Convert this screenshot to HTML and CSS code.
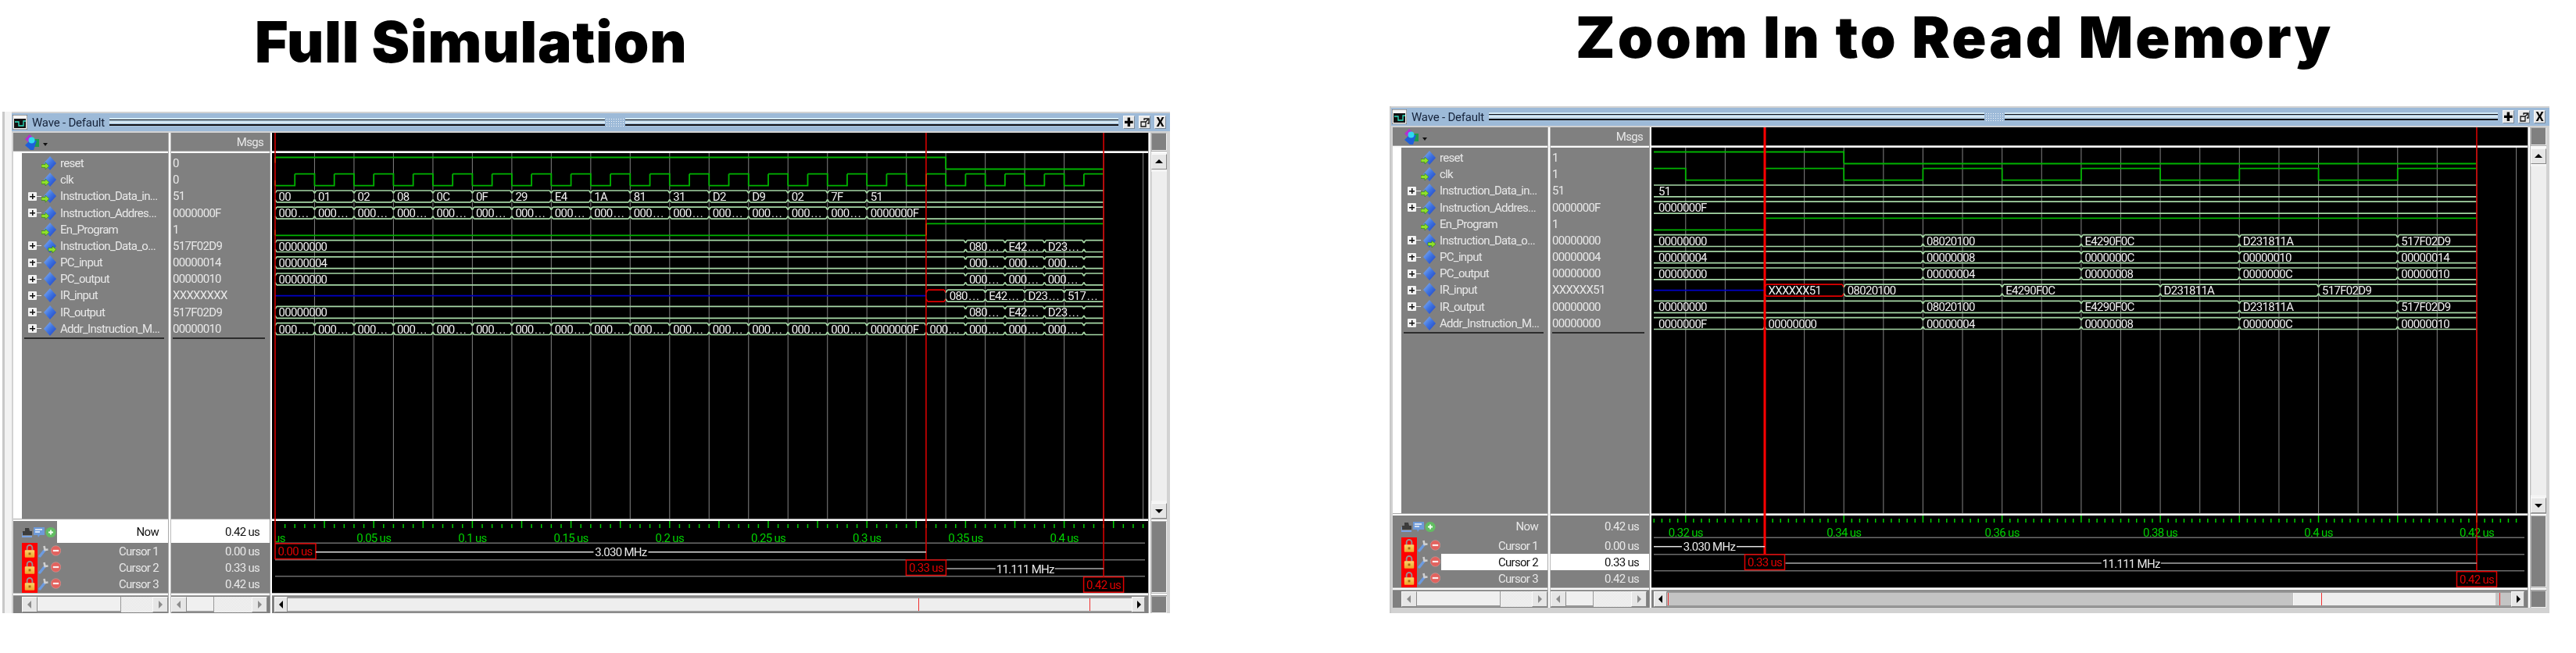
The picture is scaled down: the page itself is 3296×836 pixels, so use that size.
FILE: index.html
```html
<!DOCTYPE html>
<html lang="en">
<head>
<meta charset="utf-8">
<title>Full Simulation and Zoom In to Read Memory</title>
<link rel="stylesheet" href="styles.css">
<script src="app.js" defer></script>
</head>
<body>
<svg class="defs" width="0" height="0" aria-hidden="true">
  <defs>
    <linearGradient id="gem" x1="0" y1="0" x2="1" y2="1">
      <stop offset="0" stop-color="#8fb8f2"/><stop offset=".5" stop-color="#3f74e0"/><stop offset="1" stop-color="#1c3fc4"/>
    </linearGradient>
    <linearGradient id="gold" x1="0" y1="0" x2="0" y2="1">
      <stop offset="0" stop-color="#fbd66a"/><stop offset="1" stop-color="#eea52a"/>
    </linearGradient>
    <symbol id="sig-plain" viewBox="0 0 19 20"><path d="M11 1l8 9-8 9-8-9z" fill="url(#gem)"/></symbol>
    <symbol id="sig-in" viewBox="0 0 19 20"><path d="M11 1l8 9-8 9-8-9z" fill="url(#gem)"/><path d="M0 11.500h5V9l5 4.500-5 4.500v-2.500H0z" fill="#8fe02a" stroke="#2d7a10" stroke-width=".6"/></symbol>
    <symbol id="sig-out" viewBox="0 0 19 20"><path d="M11 1l8 9-8 9-8-9z" fill="url(#gem)"/><path d="M9 12.500h5V10l5 4.500-5 4.500v-2.500H9z" fill="#8fe02a" stroke="#2d7a10" stroke-width=".6"/></symbol>
    <symbol id="lock" viewBox="0 0 14 20"><path d="M3.500 9V5.500a3.500 3.500 0 0 1 7 0V9" fill="none" stroke="#9a8f8f" stroke-width="2"/><rect x="0.500" y="8.500" width="13" height="10" rx="1" fill="url(#gold)"/><rect x="5.500" y="12" width="3" height="3" fill="#a86b10"/></symbol>
    <symbol id="wrench" viewBox="0 0 14 18"><path d="M2 16L8.500 8" stroke="#6c9be0" stroke-width="3.400" stroke-linecap="round" fill="none"/><path d="M7.500 3L8.500 8l4-.5" stroke="#d0d0d0" stroke-width="2.600" fill="none"/></symbol>
    <symbol id="minus" viewBox="0 0 13 16"><circle cx="6.500" cy="8" r="6.300" fill="#e2625e" stroke="#c9a09e" stroke-width=".6"/><rect x="2.800" y="6.900" width="7.400" height="2.200" fill="#fbeeee"/></symbol>
    <symbol id="ni-print" viewBox="0 0 14 15"><path d="M4 6V2h5l1 4h3v5H1V6z" fill="#3c3c3c"/><path d="M0 13h13" stroke="#7aa4e4" stroke-width="2"/><path d="M0 8v5" stroke="#7aa4e4" stroke-width="1.400"/></symbol>
    <symbol id="ni-note" viewBox="0 0 14 15"><path d="M0 1h14v10H8l-2 3-1-3H0z" fill="#6e9ad8"/><path d="M2 4h9M2 7h6" stroke="#f2f6fc" stroke-width="1.400"/></symbol>
    <symbol id="ni-add" viewBox="0 0 14 15"><circle cx="7" cy="7.500" r="6.600" fill="#62bd62"/><path d="M4 7.500h6M7 4.500v6" stroke="#f4fff4" stroke-width="1.800"/></symbol>
  </defs>
</svg>

<main class="page">
  <section class="figure figure-a">
    <h1 class="heading">Full Simulation</h1>
    <div class="outer-frame">
      <div class="window window-clipped">
        <header class="title">
          <svg class="title-icon" viewBox="0 0 19 19"><rect width="19" height="19" fill="#f4f4f4" stroke="#555"/><rect x="2" y="5" width="15" height="12" fill="#111"/><path d="M3 9h5v5h6V8h3" fill="none" stroke="#2fe0c0" stroke-width="1.300"/></svg>
          <span class="title-text">Wave - Default</span>
          <i class="stripes stripes-a"></i><i class="grip"></i><i class="stripes"></i>
          <div class="title-btns">
            <span class="tbtn">+</span>
            <span class="tbtn"><svg class="restore" viewBox="0 0 12 12"><path d="M1 5h6v6H1zM5 3V1h6v6H9M7 5l3-3" fill="none" stroke="#111" stroke-width="1.300"/></svg></span>
            <span class="tbtn tbtn-x">X</span>
          </div>
        </header>
        <div class="panes">
          <div class="col col-names">
            <div class="head-cell"><svg class="multi" viewBox="0 0 21 22"><path d="M8 1l6 6-6 6-6-6z" fill="#b42fd0"/><rect x="10" y="7" width="10" height="10" fill="#1f9a4c"/><path d="M8 9l9 0-4 12-4 0-7-6z" fill="#1f5fd8"/><circle cx="10.500" cy="8.500" r="4" fill="#2fd8f0"/></svg><i class="caret"></i></div>
            <i class="hsep"></i>
            <div class="rows names">
              <div class="sig-row"><i class="exp none"></i><svg class="sig"><use href="#sig-in"/></svg><span>reset</span></div>
              <div class="sig-row"><i class="exp none"></i><svg class="sig"><use href="#sig-in"/></svg><span>clk</span></div>
              <div class="sig-row"><i class="exp"></i><svg class="sig"><use href="#sig-in"/></svg><span>Instruction_Data_in...</span></div>
              <div class="sig-row"><i class="exp"></i><svg class="sig"><use href="#sig-in"/></svg><span>Instruction_Addres...</span></div>
              <div class="sig-row"><i class="exp none"></i><svg class="sig"><use href="#sig-in"/></svg><span>En_Program</span></div>
              <div class="sig-row"><i class="exp"></i><svg class="sig"><use href="#sig-out"/></svg><span>Instruction_Data_o...</span></div>
              <div class="sig-row"><i class="exp"></i><svg class="sig"><use href="#sig-plain"/></svg><span>PC_input</span></div>
              <div class="sig-row"><i class="exp"></i><svg class="sig"><use href="#sig-plain"/></svg><span>PC_output</span></div>
              <div class="sig-row"><i class="exp"></i><svg class="sig"><use href="#sig-plain"/></svg><span>IR_input</span></div>
              <div class="sig-row"><i class="exp"></i><svg class="sig"><use href="#sig-plain"/></svg><span>IR_output</span></div>
              <div class="sig-row"><i class="exp"></i><svg class="sig"><use href="#sig-plain"/></svg><span>Addr_Instruction_M...</span></div>
              <i class="rows-end rows-end-names"></i>
            </div>
            <i class="hsep"></i>
            <div class="foot">
              <div class="now-row">
                <div class="now-icons"><svg class="ni"><use href="#ni-print"/></svg><svg class="ni"><use href="#ni-note"/></svg><svg class="ni"><use href="#ni-add"/></svg></div>
                <span class="foot-label selected">Now</span>
              </div>
              <div class="cur-row"><svg class="lock"><use href="#lock"/></svg><svg class="wrench"><use href="#wrench"/></svg><svg class="minus"><use href="#minus"/></svg><span class="foot-label">Cursor 1</span></div>
              <div class="cur-row"><svg class="lock"><use href="#lock"/></svg><svg class="wrench"><use href="#wrench"/></svg><svg class="minus"><use href="#minus"/></svg><span class="foot-label">Cursor 2</span></div>
              <div class="cur-row"><svg class="lock"><use href="#lock"/></svg><svg class="wrench"><use href="#wrench"/></svg><svg class="minus"><use href="#minus"/></svg><span class="foot-label">Cursor 3</span></div>
            </div>
            <i class="hsep hsep-4"></i>
            <div class="hscroll hscroll-names"><i class="sb-btn sb-left"></i><i class="sb-thumb thumb-names"></i><i class="sb-dots"></i><i class="sb-btn sb-right"></i></div>
          </div>
          <i class="vsep vsep-4"></i>
          <div class="col col-values">
            <div class="head-cell head-msgs">Msgs</div>
            <i class="hsep"></i>
            <div class="rows values">
              <div class="val-row">0</div><div class="val-row">0</div><div class="val-row">51</div><div class="val-row">0000000F</div><div class="val-row">1</div><div class="val-row">517F02D9</div><div class="val-row">00000014</div><div class="val-row">00000010</div><div class="val-row">XXXXXXXX</div><div class="val-row">517F02D9</div><div class="val-row">00000010</div>
              <i class="rows-end rows-end-values"></i>
            </div>
            <i class="hsep"></i>
            <div class="foot">
              <div class="now-row"><span class="foot-label val selected">0.42 us</span></div>
              <div class="cur-row"><span class="foot-label val">0.00 us</span></div>
              <div class="cur-row"><span class="foot-label val">0.33 us</span></div>
              <div class="cur-row"><span class="foot-label val">0.42 us</span></div>
            </div>
            <i class="hsep hsep-4"></i>
            <div class="hscroll hscroll-values"><i class="sb-btn sb-left"></i><i class="sb-thumb thumb-values"></i><i class="sb-dots"></i><i class="sb-btn sb-right"></i></div>
          </div>
          <i class="vsep"></i>
          <div class="col col-wave">
            <svg class="wave" id="wave-a" width="1121" height="589"></svg>
            <i class="hsep hsep-4"></i>
            <div class="hscroll hscroll-wave"><i class="sb-btn sb-left dark"></i>
              <div class="track track-light"><i class="mark mark-a1"></i><i class="mark mark-a2"></i></div>
            <i class="sb-btn sb-right dark"></i></div>
          </div>
          <i class="vsep vsep-4"></i>
          <div class="col col-vscroll">
            <i class="block block-head"></i>
            <i class="hsep"></i>
            <div class="vscroll"><i class="sb-btn sb-up"></i><i class="vtrack"></i><i class="sb-btn sb-down"></i></div>
            <i class="hsep"></i>
            <i class="block block-foot"></i>
            <i class="hsep hsep-4"></i>
            <i class="block block-corner"></i>
          </div>
        </div>
      </div>
    </div>
  </section>

  <section class="figure figure-b">
    <h1 class="heading">Zoom In to Read Memory</h1>
    <div class="window window-full">
      <header class="title">
        <svg class="title-icon" viewBox="0 0 19 19"><rect width="19" height="19" fill="#f4f4f4" stroke="#555"/><rect x="2" y="5" width="15" height="12" fill="#111"/><path d="M3 9h5v5h6V8h3" fill="none" stroke="#2fe0c0" stroke-width="1.300"/></svg>
        <span class="title-text">Wave - Default</span>
        <i class="stripes stripes-a"></i><i class="grip"></i><i class="stripes"></i>
        <div class="title-btns">
          <span class="tbtn">+</span>
          <span class="tbtn"><svg class="restore" viewBox="0 0 12 12"><path d="M1 5h6v6H1zM5 3V1h6v6H9M7 5l3-3" fill="none" stroke="#111" stroke-width="1.300"/></svg></span>
          <span class="tbtn tbtn-x">X</span>
        </div>
      </header>
      <div class="panes">
        <div class="col col-names">
          <div class="head-cell"><svg class="multi" viewBox="0 0 21 22"><path d="M8 1l6 6-6 6-6-6z" fill="#b42fd0"/><rect x="10" y="7" width="10" height="10" fill="#1f9a4c"/><path d="M8 9l9 0-4 12-4 0-7-6z" fill="#1f5fd8"/><circle cx="10.500" cy="8.500" r="4" fill="#2fd8f0"/></svg><i class="caret"></i></div>
          <i class="hsep"></i>
          <div class="rows names">
            <div class="sig-row"><i class="exp none"></i><svg class="sig"><use href="#sig-in"/></svg><span>reset</span></div>
            <div class="sig-row"><i class="exp none"></i><svg class="sig"><use href="#sig-in"/></svg><span>clk</span></div>
            <div class="sig-row"><i class="exp"></i><svg class="sig"><use href="#sig-in"/></svg><span>Instruction_Data_in...</span></div>
            <div class="sig-row"><i class="exp"></i><svg class="sig"><use href="#sig-in"/></svg><span>Instruction_Addres...</span></div>
            <div class="sig-row"><i class="exp none"></i><svg class="sig"><use href="#sig-in"/></svg><span>En_Program</span></div>
            <div class="sig-row"><i class="exp"></i><svg class="sig"><use href="#sig-out"/></svg><span>Instruction_Data_o...</span></div>
            <div class="sig-row"><i class="exp"></i><svg class="sig"><use href="#sig-plain"/></svg><span>PC_input</span></div>
            <div class="sig-row"><i class="exp"></i><svg class="sig"><use href="#sig-plain"/></svg><span>PC_output</span></div>
            <div class="sig-row"><i class="exp"></i><svg class="sig"><use href="#sig-plain"/></svg><span>IR_input</span></div>
            <div class="sig-row"><i class="exp"></i><svg class="sig"><use href="#sig-plain"/></svg><span>IR_output</span></div>
            <div class="sig-row"><i class="exp"></i><svg class="sig"><use href="#sig-plain"/></svg><span>Addr_Instruction_M...</span></div>
            <i class="rows-end rows-end-names"></i>
          </div>
          <i class="hsep"></i>
          <div class="foot">
            <div class="now-row">
              <div class="now-icons"><svg class="ni"><use href="#ni-print"/></svg><svg class="ni"><use href="#ni-note"/></svg><svg class="ni"><use href="#ni-add"/></svg></div>
              <span class="foot-label">Now</span>
            </div>
            <div class="cur-row"><svg class="lock"><use href="#lock"/></svg><svg class="wrench"><use href="#wrench"/></svg><svg class="minus"><use href="#minus"/></svg><span class="foot-label">Cursor 1</span></div>
            <div class="cur-row"><svg class="lock"><use href="#lock"/></svg><svg class="wrench"><use href="#wrench"/></svg><svg class="minus"><use href="#minus"/></svg><span class="foot-label selected">Cursor 2</span></div>
            <div class="cur-row"><svg class="lock"><use href="#lock"/></svg><svg class="wrench"><use href="#wrench"/></svg><svg class="minus"><use href="#minus"/></svg><span class="foot-label">Cursor 3</span></div>
          </div>
          <i class="hsep hsep-4"></i>
          <div class="hscroll hscroll-names"><i class="sb-btn sb-left"></i><i class="sb-thumb thumb-names"></i><i class="sb-dots"></i><i class="sb-btn sb-right"></i></div>
        </div>
        <i class="vsep vsep-4"></i>
        <div class="col col-values">
          <div class="head-cell head-msgs">Msgs</div>
          <i class="hsep"></i>
          <div class="rows values">
            <div class="val-row">1</div><div class="val-row">1</div><div class="val-row">51</div><div class="val-row">0000000F</div><div class="val-row">1</div><div class="val-row">00000000</div><div class="val-row">00000004</div><div class="val-row">00000000</div><div class="val-row">XXXXXX51</div><div class="val-row">00000000</div><div class="val-row">00000000</div>
            <i class="rows-end rows-end-values"></i>
          </div>
          <i class="hsep"></i>
          <div class="foot">
            <div class="now-row"><span class="foot-label val">0.42 us</span></div>
            <div class="cur-row"><span class="foot-label val">0.00 us</span></div>
            <div class="cur-row"><span class="foot-label val selected">0.33 us</span></div>
            <div class="cur-row"><span class="foot-label val">0.42 us</span></div>
          </div>
          <i class="hsep hsep-4"></i>
          <div class="hscroll hscroll-values"><i class="sb-btn sb-left"></i><i class="sb-thumb thumb-values"></i><i class="sb-dots"></i><i class="sb-btn sb-right"></i></div>
        </div>
        <i class="vsep"></i>
        <div class="col col-wave">
          <svg class="wave" id="wave-b" width="1121" height="589"></svg>
          <i class="hsep hsep-4"></i>
          <div class="hscroll hscroll-wave"><i class="sb-btn sb-left dark"></i>
            <div class="track track-zoomed"><i class="mark mark-b0"></i><i class="thumb-wave"></i><i class="mark mark-b1"></i><i class="mark mark-b2"></i></div>
          <i class="sb-btn sb-right dark"></i></div>
        </div>
        <i class="vsep vsep-4"></i>
        <div class="col col-vscroll">
          <i class="block block-head"></i>
          <i class="hsep"></i>
          <div class="vscroll"><i class="sb-btn sb-up"></i><i class="vtrack"></i><i class="sb-btn sb-down"></i></div>
          <i class="hsep"></i>
          <i class="block block-foot"></i>
          <i class="hsep hsep-4"></i>
          <i class="block block-corner"></i>
        </div>
      </div>
    </div>
  </section>
</main>
</body>
</html>
```
FILE: styles.css
```css
* { box-sizing: border-box; }
html, body { margin: 0; padding: 0; background: #fff; }
body { width: 3296px; height: 836px; overflow: hidden; font-family: Roboto, "Liberation Sans", sans-serif; }
i { display: block; font-style: normal; }
.defs { position: absolute; }

.page { display: flex; align-items: flex-start; }
.figure-a { margin-left: 3px; width: 1494px; }
.figure-b { margin-left: 281px; width: 1484px; }

.heading {
  margin: 0; font-family: Inter, Lato, sans-serif; font-weight: 900; color: #000;
  font-size: 73px; line-height: 95px; white-space: nowrap; filter: blur(.4px);
}
.figure-a .heading { height: 143px; padding: 6px 0 0 323px; letter-spacing: .85px; }
.figure-b .heading { height: 136px; padding: 0 0 0 238px; letter-spacing: 3px; }

.outer-frame { padding-left: 12px; background: linear-gradient(90deg, #c8c8c8 3px, #f2f2f2 3px); }
.window {
  width: 1482px; padding-top: 2px; background: #d2d2d2; overflow: hidden;
  filter: blur(.35px); color: #e8e8e8; font-size: 15px; letter-spacing: -.7px;
}
.window-clipped { height: 642px; }
.window-full { height: 647px; box-sizing: content-box; border-left: 2px solid #c8c8c8; width: 1482px; }

.title { display: flex; align-items: center; height: 23px; background: #9dbad8; color: #16233a; }
.title-icon { width: 19px; height: 19px; margin-left: 1px; flex: none; }
.title-text { width: 105px; padding-left: 6px; font-size: 15px; letter-spacing: -.2px; white-space: nowrap; flex: none; }
.stripes {
  flex: 1; height: 11px;
  background: linear-gradient(180deg, #d4eaf6 0 2px, #0a0a12 2px 3.500px, #b9d4e6 3.500px 5px, #f0f7fb 5px 6.500px, #b5cfe3 6.500px 8.500px, #0f0f16 8.500px 10px, #a9c4dc 10px);
}
.stripes-a { flex: none; width: 634px; }
.grip {
  width: 24px; height: 12px; margin: 0 1px; flex: none;
  background: radial-gradient(circle, #f4f8fb 40%, transparent 45%) 0 0 / 3px 3px;
}
.title-btns { display: flex; gap: 5px; margin: 0 5px 0 6px; flex: none; }
.tbtn {
  display: flex; align-items: center; justify-content: center; width: 15px; height: 17px;
  background: #e8e8e8; color: #000; font-size: 22px; font-weight: 900; letter-spacing: 0; line-height: 17px;
  border: 1px solid; border-color: #fafafa #7b8a9a #7b8a9a #fafafa;
}
.tbtn-x { font-size: 16px; font-weight: 700; }
.restore { width: 12px; height: 12px; }

.panes { display: flex; height: 615px; margin-top: 2px; padding-left: 2px; }
.col { display: flex; flex-direction: column; flex: none; }
.col-names { width: 198px; }
.col-values { width: 126px; }
.col-wave { width: 1121px; }
.col-vscroll { width: 20px; }
.vsep { width: 3px; flex: none; background: linear-gradient(90deg, #9a9a9a 1px, #fff 1px); }
.vsep-4 { width: 4px; background: linear-gradient(90deg, #aaa 1px, #fff 1px 3px, #bbb 3px); }
.hsep { height: 3px; flex: none; background: linear-gradient(180deg, #a8a8a8 1px, #fbfbfb 1px); }
.hsep-4 { height: 4px; background: linear-gradient(180deg, #b8b8b8 1px, #fbfbfb 1px 3px, #a0a0a0 3px); }

.head-cell { height: 23px; flex: none; background: #808080; display: flex; align-items: center; padding-left: 13px; }
.multi { width: 21px; height: 22px; }
.caret { width: 0; height: 0; margin: 6px 0 0 4px; border: 3px solid transparent; border-top: 4px solid #111; border-bottom: 0; }
.head-msgs { justify-content: flex-end; padding: 0 8px 0 0; }

.rows { height: 468px; flex: none; background: #808080; padding-top: 2.4px; display: flex; flex-direction: column; }
.names { border-left: 11px solid #fff; }
.sig-row { height: 21.2px; flex: none; display: flex; align-items: center; padding-left: 8px; white-space: nowrap; }
.val-row { height: 21.2px; flex: none; display: flex; align-items: center; padding-left: 2px; white-space: nowrap; }
.exp {
  position: relative; width: 11px; height: 11px; margin-right: 6px; flex: none; border-radius: 1px;
  background:
    linear-gradient(#111, #111) center / 7px 1.500px no-repeat,
    linear-gradient(#111, #111) center / 1.500px 7px no-repeat,
    #f2f2f2;
}
.exp::after { content: ""; position: absolute; left: 11px; top: 5px; width: 6px; height: 1px; background: #e8e8e8; }
.exp.none { visibility: hidden; }
.sig { width: 19px; height: 20px; margin-right: 5px; flex: none; }
.rows-end { height: 2px; flex: none; background: #2c2c2c; margin-top: 1px; }
.rows-end-names { margin-left: 3px; width: 179px; }
.rows-end-values { margin-left: 2px; width: 118px; }

.foot { height: 92px; flex: none; background: #808080; display: flex; flex-direction: column; }
.now-row { height: 28px; flex: none; display: flex; }
.now-icons { display: flex; align-items: center; gap: 1px; width: 56px; padding-left: 11px; flex: none; }
.ni { width: 14px; height: 15px; flex: none; }
.cur-row { height: 21.2px; flex: none; display: flex; align-items: stretch; padding-left: 11px; }
.lock { width: 20px; height: 21.2px; padding: 1px 3px; background: #ff0000; flex: none; }
.wrench { width: 14px; height: 18px; margin: 1px 1px 0 1px; flex: none; }
.minus { width: 13px; height: 16px; margin: 2px 0 0 1px; flex: none; }
.foot-label { flex: 1; display: flex; align-items: center; justify-content: flex-end; padding-right: 12px; white-space: nowrap; }
.foot-label.val { padding-right: 13px; }
.foot-label.selected { background: #fff; color: #111; }
.cur-row .foot-label { margin-left: 1px; }
.col-values .cur-row { padding-left: 0; }
.col-values .cur-row .foot-label { margin-left: 0; }

.wave { display: block; flex: none; background: #000; }

.hscroll { height: 22px; flex: none; display: flex; background: #808080; padding: 1px 0 1px 0; }
.hscroll-names { padding-left: 11px; }
.hscroll-values { padding-right: 3px; }
.hscroll-wave { padding: 1px 4px 1px 3px; }
.sb-btn { position: relative; width: 20px; flex: none; background: #e6e6e6; border: 1px solid; border-color: #fafafa #8a8a8a #8a8a8a #fafafa; }
.sb-btn::after { content: ""; position: absolute; left: 50%; top: 50%; width: 0; height: 0; border: 5px solid transparent; }
.sb-left::after { border-right-color: #8c8c8c; border-left-width: 0; transform: translate(-3px, -5px); }
.sb-right::after { border-left-color: #8c8c8c; border-right-width: 0; transform: translate(-2px, -5px); }
.dark.sb-btn { width: 17px; }
.dark.sb-left::after { border-right-color: #000; }
.dark.sb-right::after { border-left-color: #000; }
.sb-thumb { flex: none; background: #f0f0f0; border-right: 1px solid #999; border-bottom: 2px solid #999; }
.thumb-names { width: 107px; }
.thumb-values { width: 35px; }
.sb-dots { flex: 1; background: #f2f2f2 repeating-conic-gradient(#e4e4e4 0 25%, #f6f6f6 0 50%) 0 0 / 2px 2px; }

.track { position: relative; flex: 1; border-top: 2px solid #999; border-bottom: 2px solid #999; }
.track-light { background: #eeeeee; }
.track-zoomed { background: #c4c4c4; }
.thumb-wave { position: absolute; left: 801px; right: 20px; top: 0; bottom: 0; background: #eeeeee; border-left: 1px solid #fafafa; }
.mark { position: absolute; top: 0; bottom: 0; width: 1px; background: #f03030; z-index: 1; }
.mark-a1 { left: 807px; }
.mark-a2 { left: 1026px; }
.mark-b0 { left: 1px; }
.mark-b1 { left: 837px; }
.mark-b2 { left: 1065px; }

.block { background: #808080; flex: none; border: 1px solid; border-color: #b0b0b0 #eee #eee #b0b0b0; }
.block-head { height: 23px; }
.block-foot { height: 92px; }
.block-corner { height: 22px; }
.vscroll { height: 468px; flex: none; display: flex; flex-direction: column; background: #f4f4f4; padding-top: 1px; }
.vtrack { flex: 1; background: #eeeeee; margin: 3px 0; border-left: 1px solid #ddd; }
.sb-up, .sb-down { width: 20px; height: 20px; }
.sb-up::after { border-bottom-color: #000; border-top-width: 0; transform: translate(-5px, -3px); }
.sb-down::after { border-top-color: #000; border-bottom-width: 0; transform: translate(-5px, -2px); }

.wave text { font-family: Roboto, "Liberation Sans", sans-serif; font-size: 15px; letter-spacing: -.7px; }
.wave .dots { letter-spacing: .9px; }
```
FILE: app.js
```js
const NS = 'http://www.w3.org/2000/svg';
const T_END = 0.42;

const seq = (from, step, labels) => labels.map((v, i) => [from + step * i, v]);

const SIGNALS = [
  { bit: [[0, 1], [0.34, 0]] },
  { clock: true },
  { bus: [...seq(0, 0.02, ['00','01','02','08','0C','0F','29','E4','1A','81','31','D2','D9','02','7F']), [0.30, '51']] },
  { bus: [...seq(0, 0.02, Array(15).fill('00000000')), [0.30, '0000000F']] },
  { bit: [[0, 0], [0.33, 1]] },
  { bus: [[0, '00000000'], ...seq(0.35, 0.02, ['08020100','E4290F0C','D231811A','517F02D9'])] },
  { bus: [[0, '00000004'], ...seq(0.35, 0.02, ['00000008','0000000C','00000010','00000014'])] },
  { bus: [[0, '00000000'], ...seq(0.35, 0.02, ['00000004','00000008','0000000C','00000010'])] },
  { bus: [[0, null], [0.33, 'XXXXXX51', 'red'], ...seq(0.34, 0.02, ['08020100','E4290F0C','D231811A','517F02D9'])] },
  { bus: [[0, '00000000'], ...seq(0.35, 0.02, ['08020100','E4290F0C','D231811A','517F02D9'])] },
  { bus: [...seq(0, 0.02, Array(15).fill('00000000')), [0.30, '0000000F'], [0.33, '00000000'], ...seq(0.35, 0.02, ['00000004','00000008','0000000C','00000010'])] }
];

const VIEWS = [
  { id: 'wave-a', left: 348, top: 170, x: t => 352 + 2524 * t, start: 352, rightEnd: 1465, y0: 209, rowsTop: 196, rowsBot: 664, foot: 667,
    gridFrom: 1, gridTo: 22, gridStep: 0.02, tickFrom: 1, tickTo: 88, tick: 0.005, majorEvery: 5,
    labels: [[0,'0 us'],[.05,'0.05 us'],[.1,'0.1 us'],[.15,'0.15 us'],[.2,'0.2 us'],[.25,'0.25 us'],[.3,'0.3 us'],[.35,'0.35 us'],[.4,'0.4 us']], thick: -1 },
  { id: 'wave-b', left: 2113, top: 163, x: t => 2258 + 10122 * (t - 0.33), start: 2116, rightEnd: 3230, y0: 202, rowsTop: 189, rowsBot: 657, foot: 660,
    gridFrom: 64, gridTo: 85, gridStep: 0.005, tickFrom: 316, tickTo: 425, tick: 0.001, majorEvery: 10,
    labels: [[.32,'0.32 us'],[.34,'0.34 us'],[.36,'0.36 us'],[.38,'0.38 us'],[.4,'0.4 us'],[.42,'0.42 us']], thick: 1 }
];

function make(svg, tag, attrs, text) {
  const el = document.createElementNS(NS, tag);
  for (const k in attrs) el.setAttribute(k, attrs[k]);
  if (text != null) el.textContent = text;
  svg.appendChild(el);
  return el;
}
const line = (s, x1, y1, x2, y2, stroke, w = 1) => make(s, 'line', { x1, y1, x2, y2, stroke, 'stroke-width': w });
const label = (s, x, y, str, fill, anchor = 'start') => make(s, 'text', { x, y, fill, 'text-anchor': anchor }, str);

function drawBit(s, v, yc, points) {
  const hi = yc - 7.5, lo = yc + 7.5;
  const yOf = b => (b ? hi : lo);
  let d = '';
  points.forEach((p, i) => {
    const x0 = Math.max(v.x(p[0]), v.start);
    const x1 = v.x(i + 1 < points.length ? points[i + 1][0] : T_END);
    if (x1 <= v.start) return;
    d += `M${x0} ${yOf(p[1])}H${x1}`;
    if (i + 1 < points.length) d += `V${yOf(points[i + 1][1])}`;
  });
  make(s, 'path', { d, fill: 'none', stroke: '#00b400', 'stroke-width': 1.8 });
  points.forEach(p => {
    if (Math.abs(p[0] - 0.33) < 1e-6) line(s, v.x(0.33), hi, v.x(0.33), lo, '#f0e020', 1.8);
  });
  if (v.start === v.x(0)) line(s, v.start, yOf(points[0][1]) + (points[0][1] ? 0 : -7), v.start, yOf(points[0][1]) + (points[0][1] ? 7 : 0), '#c8c020', 1.8);
}

function clockPoints() {
  const pts = [];
  for (let k = 0; k <= 41; k++) pts.push([k * 0.01, k % 2]);
  return pts;
}

function busText(s, x, y, text) {
  const el = label(s, x, y, text.replace('...', ''), '#f0f0f0');
  if (text.endsWith('...')) {
    const dots = document.createElementNS(NS, 'tspan');
    dots.setAttribute('class', 'dots');
    dots.setAttribute('dx', '1.5');
    dots.textContent = '...';
    el.appendChild(dots);
  }
}

function drawBus(s, v, yc, segs) {
  const yt = yc - 7.4, yb = yc + 7.5;
  segs.forEach((seg, i) => {
    const tTo = i + 1 < segs.length ? segs[i + 1][0] : T_END;
    const xTo = v.x(tTo);
    if (xTo <= v.start) return;
    const clipped = v.x(seg[0]) < v.start;
    const xFrom = Math.max(v.x(seg[0]), v.start);
    if (seg[1] === null) {
      line(s, xFrom, yc, xTo, yc, '#0000c8', 1.8);
      return;
    }
    const open = tTo === T_END;
    const stroke = seg[2] === 'red' ? '#e00000' : '#a6d8a6';
    const a = clipped ? xFrom : xFrom + 2;
    const b = open ? xTo : xTo - 2;
    let d = `M${a} ${yt}H${b}M${a} ${yb}H${b}`;
    if (!clipped) d += `M${xFrom} ${yc - 4}L${a} ${yt}M${xFrom} ${yc + 4}L${a} ${yb}`;
    if (!open) d += `M${xTo} ${yc - 4}L${b} ${yt}M${xTo} ${yc + 4}L${b} ${yb}`;
    make(s, 'path', { d, fill: 'none', stroke, 'stroke-width': 1.7 });
    const width = xTo - xFrom;
    let text = seg[1];
    if (text.length > 2 && width < 70) text = width > 40 ? text.slice(0, 3) + '...' : '';
    if (seg[2] === 'red' && width < 70) text = '';
    if (text) busText(s, xFrom + (clipped ? 6 : 4.5), yc + 5.5, text);
  });
}

function drawRuler(s, v) {
  const f = v.foot;
  for (let k = v.tickFrom; k <= v.tickTo; k++) {
    const t = k * v.tick;
    const major = k % v.majorEvery === 0;
    const x = v.x(t);
    const mark = Math.abs(t - 0.33) < 1e-6 || Math.abs(t - 0.42) < 1e-6;
    line(s, x, major ? f : f + 4, x, f + 9, mark ? '#f0e020' : '#00d000', 1.5);
  }
  const clip = make(s, 'clipPath', { id: v.id + '-clip' });
  make(clip, 'rect', { x: v.start, y: f, width: 1200, height: 30 });
  v.labels.forEach(([t, str]) => {
    label(s, v.x(t), f + 26.5, str, '#00d000', 'middle').setAttribute('clip-path', `url(#${v.id}-clip)`);
  });
  [28.3, 49.7, 70.7].forEach(dy => line(s, v.start, f + dy, v.rightEnd, f + dy, '#6c6c6c', 1.6));
}

function drawCursors(s, v) {
  const f = v.foot;
  const cursors = [
    { t: 0, str: '0.00 us', top: 29, mid: 39.7, stop: 28.3 },
    { t: 0.33, str: '0.33 us', top: 50, mid: 61, stop: 49.7 },
    { t: 0.42, str: '0.42 us', top: 71.700, mid: 82, stop: 70.7 }
  ];
  cursors.forEach((c, i) => {
    const x = v.x(c.t);
    if (x < v.start) return;
    const isThick = i === v.thick;
    line(s, x, v.top, x, f + c.stop, isThick ? '#ff0000' : '#d40000', isThick ? 3 : 1.6);
  });
  const rates = [{ str: '3.030 MHz', w: 70, color: '#e0e0e0' }, { str: '11.111 MHz', w: 76, color: '#a8a8a8' }];
  cursors.forEach((c, i) => {
    const x = v.x(c.t);
    const boxW = 51;
    const visible = x >= v.start;
    const bx = Math.max(x - boxW / 2, v.start);
    if (visible) {
      make(s, 'rect', { x: bx, y: f + c.top, width: boxW + (x === v.start ? 1 : 0), height: 19.5, fill: '#000', stroke: '#e00000', 'stroke-width': 1.5 });
      label(s, bx + boxW / 2, f + c.top + 15, c.str, '#e00000', 'middle');
    }
    if (i < 2) {
      const from = visible ? bx + boxW + 1 : v.start;
      const to = v.x(cursors[i + 1].t);
      const mid = (from + to) / 2;
      const r = rates[i];
      line(s, from, f + c.mid, mid - r.w / 2, f + c.mid, r.color, 1.6);
      line(s, mid + r.w / 2, f + c.mid, to, f + c.mid, r.color, 1.6);
      label(s, mid, f + c.mid + 5.5, r.str, '#e8e8e8', 'middle');
    }
  });
}

function drawView(v) {
  const s = document.getElementById(v.id);
  s.setAttribute('viewBox', `${v.left} ${v.top} 1121 589`);
  const band = y => {
    make(s, 'rect', { x: v.left, y: y - 1, width: 1121, height: 1, fill: '#a8a8a8' });
    make(s, 'rect', { x: v.left, y, width: 1121, height: 2, fill: '#fbfbfb' });
  };
  for (let k = v.gridFrom; k <= v.gridTo; k++) {
    const x = v.x(k * v.gridStep);
    line(s, x, v.rowsTop, x, v.rowsBot, '#787878', 1.1);
  }
  SIGNALS.forEach((sig, i) => {
    const yc = v.y0 + 21.2 * i;
    if (sig.clock) drawBit(s, v, yc, clockPoints());
    else if (sig.bit) drawBit(s, v, yc, sig.bit);
    else drawBus(s, v, yc, sig.bus);
  });
  band(v.rowsTop - 2);
  band(v.rowsBot + 1);
  drawRuler(s, v);
  drawCursors(s, v);
}

VIEWS.forEach(drawView);
```
